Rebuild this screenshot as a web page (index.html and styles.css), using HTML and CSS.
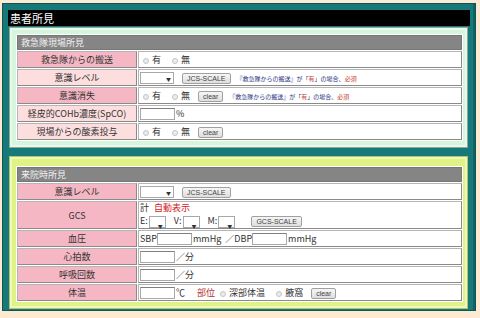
FILE: index.html
```html
<!DOCTYPE html>
<html lang="ja">
<head>
    <meta charset="UTF-8">
    <title>患者所見</title>
    <link rel="stylesheet" href="styles.css">
</head>
<body>
    <div class="frame">
        <div class="title">患者所見</div>

        <!-- 救急隊現場所見 -->
        <div class="panel panel-scene">
            <table class="form">
                <tr><th colspan="2">救急隊現場所見</th></tr>
                <tr>
                    <td class="label req">救急隊からの搬送</td>
                    <td class="val">
                        <label class="opt"><input type="radio" name="transport">有</label>
                        <label class="opt"><input type="radio" name="transport">無</label>
                    </td>
                </tr>
                <tr>
                    <td class="label">意識レベル</td>
                    <td class="val">
                        <span class="sel"><select></select></span>
                        <button class="btn btn-jcs">JCS-SCALE</button>
                        <span class="note">『救急隊からの搬送』が「<em>有</em>」の場合、<em>必須</em></span>
                    </td>
                </tr>
                <tr>
                    <td class="label req">意識消失</td>
                    <td class="val">
                        <label class="opt"><input type="radio" name="loss">有</label>
                        <label class="opt"><input type="radio" name="loss">無</label>
                        <button class="btn">clear</button>
                        <span class="note">『救急隊からの搬送』が「<em>有</em>」の場合、<em>必須</em></span>
                    </td>
                </tr>
                <tr>
                    <td class="label">経皮的COHb濃度(SpCO)</td>
                    <td class="val"><input type="text" class="txt">%</td>
                </tr>
                <tr>
                    <td class="label">現場からの酸素投与</td>
                    <td class="val">
                        <label class="opt"><input type="radio" name="oxygen">有</label>
                        <label class="opt"><input type="radio" name="oxygen">無</label>
                        <button class="btn">clear</button>
                    </td>
                </tr>
            </table>
        </div>

        <!-- 来院時所見 -->
        <div class="panel panel-arrival">
            <table class="form">
                <tr><th colspan="2">来院時所見</th></tr>
                <tr>
                    <td class="label req">意識レベル</td>
                    <td class="val">
                        <span class="sel"><select></select></span>
                        <button class="btn btn-jcs">JCS-SCALE</button>
                    </td>
                </tr>
                <tr class="row-gcs">
                    <td class="label req">GCS</td>
                    <td class="val">
                        <div class="gcs-total">計 <span class="auto">自動表示</span></div>
                        <div class="gcs-items">
                            E:<span class="sel sel-sm"><select></select></span>
                            V:<span class="sel sel-sm"><select></select></span>
                            M:<span class="sel sel-sm"><select></select></span>
                            <button class="btn btn-gcs">GCS-SCALE</button>
                        </div>
                    </td>
                </tr>
                <tr>
                    <td class="label req">血圧</td>
                    <td class="val">
                        SBP<input type="text" class="txt">mmHg <span class="slash">／DBP</span><input type="text" class="txt">mmHg
                    </td>
                </tr>
                <tr>
                    <td class="label req">心拍数</td>
                    <td class="val"><input type="text" class="txt">／分</td>
                </tr>
                <tr>
                    <td class="label req">呼吸回数</td>
                    <td class="val"><input type="text" class="txt">／分</td>
                </tr>
                <tr>
                    <td class="label req">体温</td>
                    <td class="val">
                        <input type="text" class="txt">℃
                        <span class="site">部位</span>
                        <label class="opt"><input type="radio" name="site">深部体温</label>
                        <label class="opt"><input type="radio" name="site">腋窩</label>
                        <button class="btn">clear</button>
                    </td>
                </tr>
            </table>
        </div>
    </div>
</body>
</html>
```

FILE: styles.css
```css
body {
    margin: 0;
    background-color: #fcead3;
    font-family: "Noto Sans CJK JP", "Liberation Sans", sans-serif;
    color: #333;
}
.frame {
    margin: 3px 4px 0 2px;
    height: 300px;
    border: 1px solid #0b5656;
    background-color: #18797a;
    padding: 6px 5px 0 5px;
    box-shadow: inset -2px 0 0 #0f6565;
}
.title {
    height: 16px;
    line-height: 16px;
    background-color: #000;
    color: #fff;
    font-size: 11px;
    padding-left: 2px;
}
.panel {
    margin: 1px 2px 0 1px;
    border: 1px solid #8fa79a;
    box-shadow: inset 0 0 0 2px rgba(255, 255, 255, 0.45);
    padding: 6px 4px 6px 6px;
}
.panel-scene {
    background-color: #d5f5dd;
}
.panel-arrival {
    margin-top: 8px;
    background-color: #e0f186;
    border-color: #b4c268;
    padding-top: 9px;
}

/* form table */
.form {
    width: 100%;
    border-collapse: separate;
    border-spacing: 1px;
    background-color: #fff;
    font-size: 9px;
}
.form th {
    height: 13px;
    padding: 0 0 0 3px;
    background-color: #858585;
    color: #f2f2f2;
    font-weight: normal;
    text-align: left;
    border: 1px solid #777;
}
.form td {
    height: 15px;
    padding: 0;
    border: 1px solid;
    border-color: #b5b5b5 #8a8a8a #8a8a8a #b5b5b5;
    white-space: nowrap;
}
.form .label {
    width: 118px;
    text-align: center;
    background-color: #fcdede;
}
.form .label.req {
    background-color: #f5b7c4;
}
.form .val {
    padding-left: 1px;
}
.row-gcs td {
    height: 26px;
}

/* controls */
.opt {
    margin: 0 6px 0 3px;
}
.opt input {
    appearance: none;
    width: 6px;
    height: 6px;
    margin: 0 3px 0 0;
    border: 1px solid #c4c4c4;
    border-radius: 50%;
    background-color: #ececec;
    vertical-align: -1px;
}
.txt {
    width: 33px;
    height: 10px;
    margin: 0 1px 0 0;
    padding: 0;
    border: 1px solid #a8a8a8;
    border-top-color: #808080;
    vertical-align: middle;
}
.btn {
    height: 11px;
    padding: 0 4px;
    margin: 0 2px 0 0;
    border: 1px solid #a0a0a0;
    border-radius: 2px;
    background: linear-gradient(#f6f6f6, #dedede);
    color: #444;
    font-family: "Liberation Sans", sans-serif;
    font-size: 7px;
    line-height: 9px;
    vertical-align: middle;
}
.btn-jcs {
    margin-left: 6px;
}
.btn-gcs {
    margin-left: 8px;
}
.sel {
    position: relative;
    display: inline-block;
    vertical-align: middle;
}
.sel select {
    appearance: none;
    display: block;
    width: 34px;
    height: 12px;
    border: 1px solid #a8a8a8;
    background-color: #fff;
}
.sel::after {
    content: "▼";
    position: absolute;
    right: 3px;
    top: 3px;
    font-size: 5px;
    color: #333;
}
.sel-sm {
    margin: 0 6px 0 1px;
}
.sel-sm select {
    width: 17px;
}
.note {
    margin-left: 2px;
    font-size: 6px;
    color: #1f2f7e;
}
.note em {
    font-style: normal;
    color: #c83a2a;
}
.gcs-total {
    line-height: 12px;
}
.gcs-total .auto {
    margin-left: 3px;
    color: #d42020;
}
.gcs-items {
    line-height: 13px;
}
.slash {
    margin-left: 2px;
}
.site {
    margin-left: 10px;
    color: #b03030;
}
```
